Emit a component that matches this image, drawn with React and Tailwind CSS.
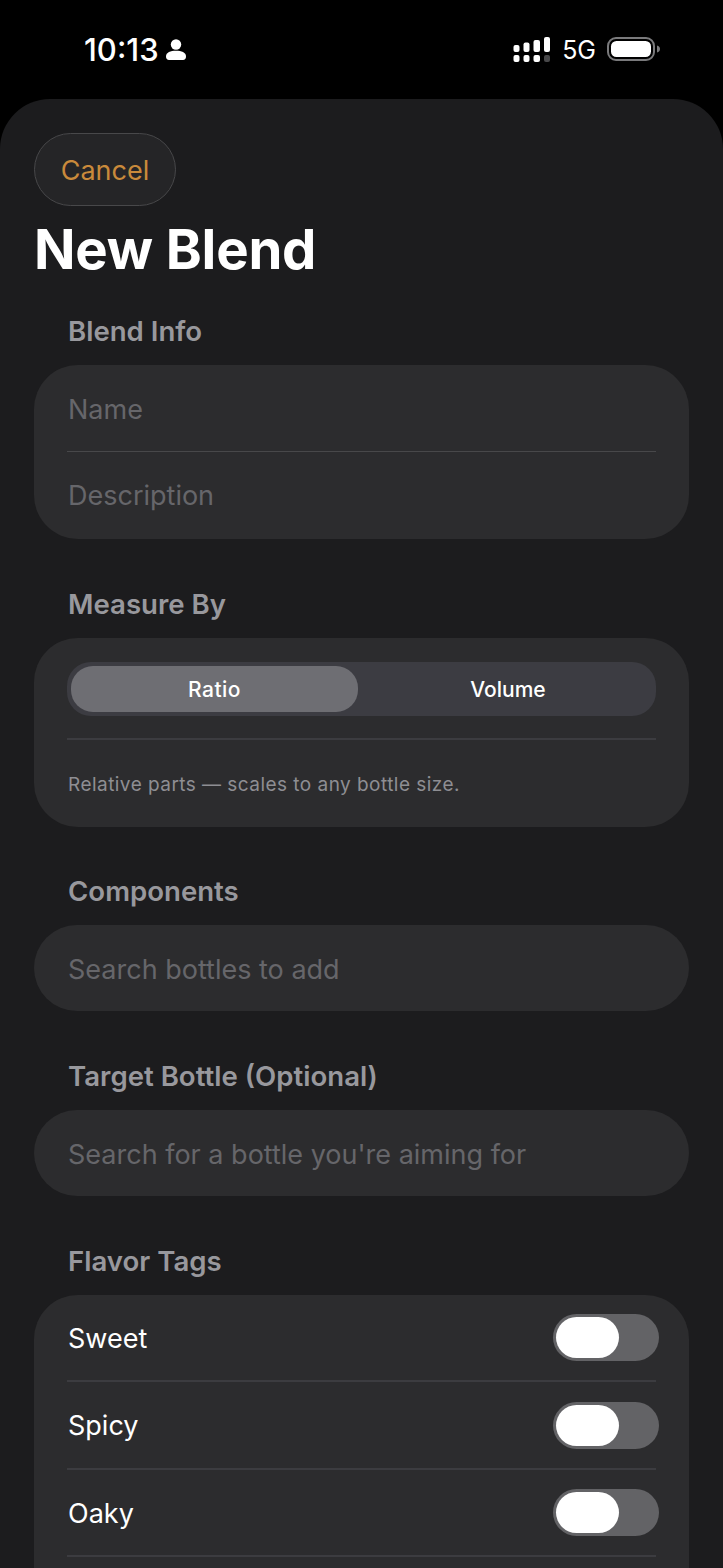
import React from 'react';

const FLAVORS = ['Sweet', 'Spicy', 'Oaky'];

function SectionLabel({ children }) {
  return <h2 className="h-[34px] pl-[68px] mb-[17px] text-[27.6px] leading-[34px] font-semibold text-[#98989d]">{children}</h2>;
}

function Divider() {
  return <div className="h-[2px] bg-[#3c3c40]" />;
}

function SearchCard({ children }) {
  return <div className="h-[86px] mx-[34px] pl-[34px] pr-[33px] pt-[4px] flex items-center rounded-[44px] bg-[#2c2c2e] text-[27px] text-[#66666a]">{children}</div>;
}

function Toggle() {
  return (
    <div className="w-[106px] h-[47px] p-[3px] rounded-full bg-[#636366]">
      <div className="w-[63px] h-[41px] rounded-full bg-white" />
    </div>
  );
}

function StatusBar() {
  return (
    <div className="h-[99px] flex items-center justify-between pl-[84px] pr-[63px] pb-[1px] text-white">
      <div className="flex items-center gap-[7px]">
        <span className="text-[31px] font-medium leading-none">10:13</span>
        <svg width="20" height="21" viewBox="0 0 20 21" fill="white">
          <circle cx="10" cy="5.5" r="5.2" />
          <path d="M0 17.5C0 13.5 4.5 11.8 10 11.8S20 13.5 20 17.5C20 19.8 18.8 21 17 21H3C1.2 21 0 19.8 0 17.5Z" />
        </svg>
      </div>
      <div className="flex items-center">
        <svg width="38" height="25" viewBox="0 0 38 25" fill="white">
          <rect x="0.5" y="8" width="6" height="7" rx="2" />
          <rect x="10.5" y="5.5" width="6" height="9.5" rx="2" />
          <rect x="20.5" y="3" width="6.5" height="12" rx="2" />
          <rect x="31" y="0" width="6" height="15" rx="2" />
          <rect x="0.5" y="18" width="6" height="7" rx="2" />
          <rect x="10.5" y="18" width="6" height="7" rx="2" />
          <rect x="20.5" y="18" width="6.5" height="7" rx="2" />
          <rect x="31" y="18" width="6" height="7" rx="2" fill="#48484a" />
        </svg>
        <span className="ml-[11px] pt-[2px] text-[25px] leading-none">5G</span>
        <svg className="ml-[11px]" width="53" height="24" viewBox="0 0 53 24">
          <rect x="1" y="1" width="46" height="22" rx="8" fill="none" stroke="#7a7a7c" strokeWidth="2" />
          <rect x="4" y="4" width="40" height="16" rx="5.5" fill="white" />
          <path d="M50 8.5C51.8 9 53 10.3 53 12S51.8 15 50 15.5Z" fill="#7a7a7c" />
        </svg>
      </div>
    </div>
  );
}

export default function App() {
  return (
    <div className="h-[1568px] overflow-hidden bg-black font-['Inter',sans-serif]">
      <StatusBar />
      <div className="h-[1469px] overflow-hidden rounded-t-[50px] bg-[#1c1c1e] pt-[34px]">
        <button className="ml-[34px] w-[142px] h-[73px] pt-[4px] rounded-full border border-[#48484a] bg-[#252527] text-[27px] text-[#c98a3b]">Cancel</button>
        <h1 className="mt-[19px] pl-[34px] h-[48px] text-[54.5px] leading-[48px] font-bold text-white tracking-[-0.2px]">New Blend</h1>

        <div className="mt-[41px]">
          <SectionLabel>Blend Info</SectionLabel>
          <div className="mx-[34px] px-[33px] rounded-[44px] bg-[#2c2c2e] text-[27px] text-[#66666a]">
            <div className="h-[86px] pl-[1px] pt-[5px] flex items-center">Name</div>
            <div className="h-[1px] bg-[#48484a]" />
            <div className="h-[87px] pl-[1px] pt-[2px] flex items-center">Description</div>
          </div>
        </div>

        <div className="mt-[48px]">
          <SectionLabel>Measure By</SectionLabel>
          <div className="h-[189px] mx-[34px] px-[33px] pt-[24px] rounded-[44px] bg-[#2c2c2e]">
            <div className="h-[54px] pl-[4px] py-[4px] flex rounded-[24px] bg-[#3c3c42] text-[21px] font-medium text-white">
              <div className="w-[287px] pt-[2px] flex items-center justify-center rounded-[22px] bg-[#6e6e73] tracking-[0.5px]">Ratio</div>
              <div className="flex-1 pt-[2px] pl-[2px] flex items-center justify-center">Volume</div>
            </div>
            <div className="mt-[22px]"><Divider /></div>
            <p className="mt-[33px] pl-[1px] text-[19px] leading-[24px] tracking-[0.46px] text-[#8e8e93]">Relative parts — scales to any bottle size.</p>
          </div>
        </div>

        <div className="mt-[47px]">
          <SectionLabel>Components</SectionLabel>
          <SearchCard>Search bottles to add</SearchCard>
        </div>

        <div className="mt-[48px]">
          <SectionLabel>Target Bottle (Optional)</SectionLabel>
          <SearchCard>Search for a bottle you're aiming for</SearchCard>
        </div>

        <div className="mt-[48px]">
          <SectionLabel>Flavor Tags</SectionLabel>
          <div className="mx-[34px] pl-[33px] pr-[30px] rounded-t-[44px] bg-[#2c2c2e]">
            {FLAVORS.map(f => (
              <div key={f} className="h-[87.5px]">
                <div className="h-[85px] flex items-center justify-between text-[27px] text-white">
                  <span className="pl-[1px] pt-[3px]">{f}</span>
                  <Toggle />
                </div>
                <div className="mr-[3px]"><Divider /></div>
              </div>
            ))}
            <div className="h-[60px]" />
          </div>
        </div>
      </div>
    </div>
  );
}
